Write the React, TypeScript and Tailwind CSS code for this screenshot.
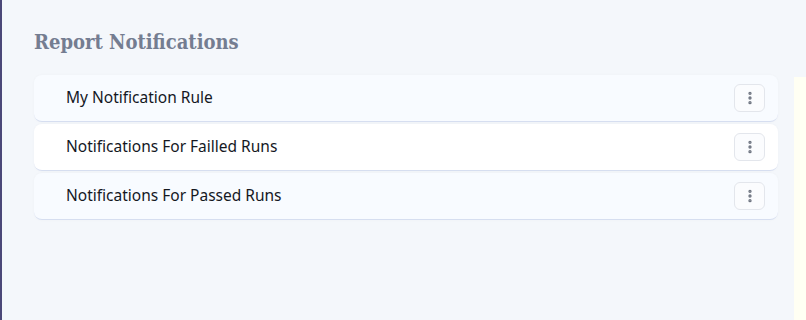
import { EllipsisVertical } from "lucide-react";

const regras = [
    { id: 1, nome: "My Notification Rule", bg: "bg-[#f8fbff]" },
    { id: 2, nome: "Notifications For Failled Runs", bg: "bg-white" },
    { id: 3, nome: "Notifications For Passed Runs", bg: "bg-[#f8fbff]" },
];

export default function App() {
    return (
        <div className="flex h-[320px] w-[806px] overflow-hidden bg-[#f4f7fb] font-['Noto_Sans',sans-serif]">
            <div className="w-[2px] shrink-0 bg-[#4b4878]" />
            <main className="flex flex-1 gap-4 pl-8 pt-[27px]">
                <section className="w-[744px] shrink-0">
                    <h1 className="mb-[18px] font-['DejaVu_Serif_Condensed','DejaVu_Serif',serif] text-[20px] font-bold leading-[30px] text-[#747d91]">
                        Report Notifications
                    </h1>
                    <div className="flex flex-col gap-[2px]">
                        {regras.map((regra) => (
                            <div
                                key={regra.id}
                                className={`flex h-[47px] items-center justify-between rounded-lg border-b border-[#d6def0] pl-8 pr-[13px] shadow-[0_0_3px_rgba(0,0,0,0.03)] ${regra.bg}`}
                            >
                                <span className="text-[15.5px] text-[#15181f]">{regra.nome}</span>
                                <button className="flex h-[28px] w-[31px] items-center justify-center rounded-md border border-[#e3e6ec] bg-[#fbfcfe]">
                                    <EllipsisVertical size={16} strokeWidth={3} className="text-[#6e7480]" />
                                </button>
                            </div>
                        ))}
                    </div>
                </section>
                <aside className="mt-[50px] flex-1 bg-[#fffff3]" />
            </main>
        </div>
    );
}
